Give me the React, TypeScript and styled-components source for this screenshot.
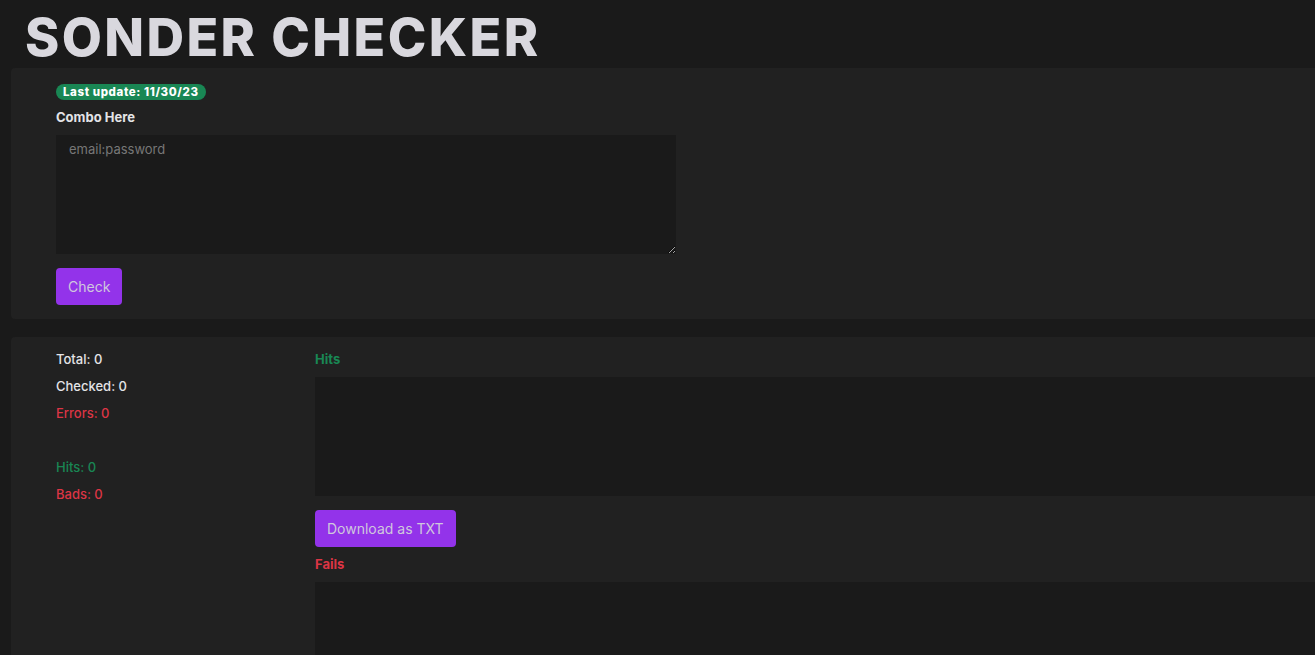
import styled, { createGlobalStyle } from 'styled-components'

const GlobalStyle = createGlobalStyle`
  html, body {
    margin: 0;
    padding: 0;
    background-color: #1a1a1a;
    overflow: hidden;
  }

  body {
    font-family: Inter, "Noto Sans", sans-serif;
    color: #e4e4e7;
  }

  * {
    box-sizing: border-box;
  }
`

const Page = styled.div`
  padding: 0 0 0 11px;
  width: 1380px;
`

const Title = styled.h1`
  margin: 0;
  padding: 8px 0 0 14px;
  height: 68px;
  font-size: 52px;
  line-height: 60px;
  font-weight: 800;
  letter-spacing: 2.4px;
  color: #d9d8de;
`

const Panels = styled.div`
  display: flex;
  flex-direction: column;
  gap: 18px;
`

const Panel = styled.section`
  background-color: #212121;
  border-radius: 4px;
  padding: 16px 45px 14px;
`

const Badge = styled.div`
  width: fit-content;
  background-color: #198754;
  color: #fff;
  font-size: 11.5px;
  font-weight: 800;
  letter-spacing: 0.6px;
  line-height: 16px;
  padding: 0 7px;
  border-radius: 8px;
`

const Label = styled.div<{ $color?: string }>`
  margin-top: 9px;
  font-size: 13px;
  font-weight: 700;
  line-height: 16px;
  color: ${({ $color }) => $color || '#e4e4e7'};
`

const TextArea = styled.textarea<{ $fill?: boolean }>`
  display: block;
  width: ${({ $fill }) => ($fill ? '100%' : '620px')};
  height: 119px;
  margin-top: 10px;
  padding: 6px 13px;
  background-color: #1a1a1a;
  border: none;
  outline: none;
  color: #ddd;
  font-family: Inter, "Noto Sans", sans-serif;
  font-size: 13px;
  line-height: 16px;
  resize: ${({ $fill }) => ($fill ? 'none' : 'both')};

  &::placeholder {
    color: #777;
  }
`

const Button = styled.button`
  display: block;
  align-self: flex-start;
  margin-top: 14px;
  height: 37px;
  padding: 0 12px;
  background-color: #9333ea;
  color: #cfc7dc;
  border: none;
  border-radius: 4px;
  font-family: Inter, "Noto Sans", sans-serif;
  font-size: 14px;
  font-weight: 400;
  cursor: pointer;
`

const ResultsPanel = styled(Panel)`
  display: grid;
  grid-template-columns: 259px 1fr;
  padding-top: 14px;
  height: 330px;
`

const Stats = styled.div`
  display: flex;
  flex-direction: column;
  gap: 11px;
`

const Stat = styled.div<{ $color?: string; $gap?: boolean }>`
  font-size: 13px;
  font-weight: 500;
  line-height: 16px;
  color: ${({ $color }) => $color || '#e4e4e7'};
  margin-top: ${({ $gap }) => ($gap ? '27px' : '0')};
`

const Output = styled.div`
  display: flex;
  flex-direction: column;
`

const OutputLabel = styled(Label)`
  margin-top: 0;
`

const App = () => {
  return (
    <>
      <GlobalStyle />
      <Page>
        <Title>SONDER CHECKER</Title>
        <Panels>
          <Panel>
            <Badge>Last update: 11/30/23</Badge>
            <Label>Combo Here</Label>
            <TextArea placeholder="email:password" />
            <Button>Check</Button>
          </Panel>
          <ResultsPanel>
            <Stats>
              <Stat>Total: 0</Stat>
              <Stat>Checked: 0</Stat>
              <Stat $color="#dc3545">Errors: 0</Stat>
              <Stat $color="#198754" $gap>Hits: 0</Stat>
              <Stat $color="#dc3545">Bads: 0</Stat>
            </Stats>
            <Output>
              <OutputLabel $color="#198754">Hits</OutputLabel>
              <TextArea $fill readOnly />
              <Button>Download as TXT</Button>
              <Label $color="#dc3545">Fails</Label>
              <TextArea $fill readOnly />
            </Output>
          </ResultsPanel>
        </Panels>
      </Page>
    </>
  )
}

export default App
